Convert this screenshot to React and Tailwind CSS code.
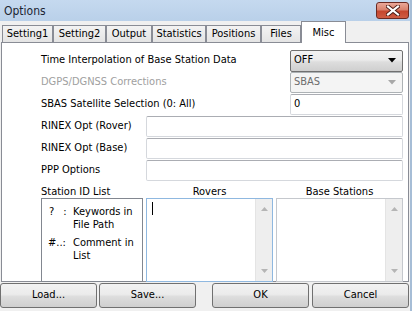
import React from "react";

const tabs = ["Setting1", "Setting2", "Output", "Statistics", "Positions", "Files"];
const tabWidths = ["w-[51px]", "w-[53px]", "w-[46px]", "w-[54px]", "w-[55px]", "w-[40px]"];

function CloseButton() {
  return (
    <div className="w-[33px] h-[17px] rounded-[3px] border border-[#6b2a22] bg-[linear-gradient(#eaa899,#d9826e_45%,#c5462e_55%,#cf5c43)] flex items-center justify-center">
      <svg width="14" height="11" viewBox="0 0 14 11">
        <path d="M2 1.5 L12 9.5 M12 1.5 L2 9.5" stroke="#4a1a14" strokeWidth="4" strokeLinecap="square" />
        <path d="M2 1.5 L12 9.5 M12 1.5 L2 9.5" stroke="#ffffff" strokeWidth="2.2" strokeLinecap="square" />
      </svg>
    </div>
  );
}

function Arrow({ color }) {
  return (
    <svg width="8" height="5" viewBox="0 0 8 5">
      <path d="M0 0 H8 L4 4.5 Z" fill={color} />
    </svg>
  );
}

function Scrollbar() {
  return (
    <div className="w-[17px] h-full bg-[#eeeeee] border-l border-[#e4e4e4] flex flex-col items-center justify-between py-[8px]">
      <svg width="7" height="4" viewBox="0 0 7 4">
        <path d="M0 4 H7 L3.5 0 Z" fill="#b5b5b5" />
      </svg>
      <svg width="7" height="4" viewBox="0 0 7 4">
        <path d="M0 0 H7 L3.5 4 Z" fill="#b5b5b5" />
      </svg>
    </div>
  );
}

function Field({ children, className = "" }) {
  return (
    <div className={`h-[21px] bg-white border border-[#d5d8dd] border-t-[#abadb3] rounded-[2px] flex items-center px-[3px] ${className}`}>
      {children}
    </div>
  );
}

function Button({ label, className = "" }) {
  return (
    <div className={`h-[25px] w-[97px] rounded-[3px] border border-[#707070] bg-[linear-gradient(#f2f2f2,#ebebeb_45%,#dddddd_55%,#cfcfcf)] flex items-center justify-center ${className}`}>
      {label}
    </div>
  );
}

export default function App() {
  return (
    <div className="w-[412px] h-[311px] overflow-hidden bg-[#f0f0f0] text-[11px] text-black font-['DejaVu_Sans_Condensed','Liberation_Sans',sans-serif] border-r-2 border-[#a6bdd6]">
      {/* title bar */}
      <div className="h-[21px] bg-[linear-gradient(#c5d9ef,#b9d0e9)] flex items-center justify-between pl-[4px] pr-[1px]">
        <span className="text-[12px] text-[#1c2633]">Options</span>
        <CloseButton />
      </div>

      {/* tabs */}
      <div className="h-[21px] flex items-end pl-[2px]">
        {tabs.map((t, i) => (
          <div
            key={t}
            className={`h-[17px] ${tabWidths[i]} border border-b-0 border-[#898c95] bg-[linear-gradient(#f3f3f3,#e4e4e4)] flex items-center justify-center`}
          >
            {t}
          </div>
        ))}
        <div className="relative z-10 h-[22px] w-[45px] -mb-px border border-b-0 border-[#898c95] bg-white flex items-start justify-center pt-[3px]">
          Misc
        </div>
      </div>

      {/* panel */}
      <div className="ml-[1px] w-[408px] h-[240px] bg-white border border-[#898c95] pt-[7px] pl-[39px] pr-[5px] flex flex-col gap-px">
        <div className="h-[21px] flex items-center">
          <span className="flex-1">Time Interpolation of Base Station Data</span>
          <div className="w-[113px] h-[22px] rounded-[2px] border border-[#707070] bg-[linear-gradient(#f2f2f2,#ebebeb_45%,#dddddd_55%,#cfcfcf)] flex items-center justify-between pl-[3px] pr-[6px]">
            <span>OFF</span>
            <Arrow color="#000000" />
          </div>
        </div>
        <div className="h-[21px] flex items-center">
          <span className="flex-1 text-[#a0a0a0]">DGPS/DGNSS Corrections</span>
          <div className="w-[113px] h-[21px] rounded-[2px] border border-[#adb2b5] bg-[#f4f4f4] flex items-center justify-between pl-[3px] pr-[6px] text-[#6d6d6d]">
            <span>SBAS</span>
            <Arrow color="#a8a8a8" />
          </div>
        </div>
        <div className="h-[21px] flex items-center">
          <span className="flex-1">SBAS Satellite Selection (0: All)</span>
          <Field className="w-[113px]">0</Field>
        </div>
        {["RINEX Opt (Rover)", "RINEX Opt (Base)", "PPP Options"].map((l) => (
          <div key={l} className="h-[21px] flex items-center">
            <span className="w-[105px]">{l}</span>
            <Field className="flex-1" />
          </div>
        ))}

        {/* station lists */}
        <div className="mt-[3px] grid grid-cols-[102px_127px_127px] gap-x-[3px]">
          <div className="h-[13px] leading-[13px]">Station ID List</div>
          <div className="h-[13px] leading-[13px] text-center">Rovers</div>
          <div className="h-[13px] leading-[13px] text-center">Base Stations</div>

          <div className="h-[84px] border border-[#828790] pt-[6px] pl-[6px] grid grid-cols-[25px_1fr] gap-y-[5px] content-start leading-[13px]">
            <span className="flex gap-[9px] pl-px">
              <span>?</span>
              <span>:</span>
            </span>
            <span>Keywords in<br />File Path</span>
            <span>#..:</span>
            <span>Comment in<br />List</span>
          </div>
          <div className="h-[84px] border border-[#8fb8e0] flex">
            <div className="flex-1 pl-[5px] pt-[3px]">
              <div className="w-px h-[13px] bg-black" />
            </div>
            <Scrollbar />
          </div>
          <div className="h-[84px] border border-[#c5c8cd] flex">
            <div className="flex-1" />
            <Scrollbar />
          </div>
        </div>
      </div>

      {/* buttons */}
      <div className="mt-[1px] flex">
        <Button label="Load..." />
        <Button label="Save..." className="ml-[2px]" />
        <Button label="OK" className="ml-[16px] w-[96px]" />
        <Button label="Cancel" className="ml-[3px]" />
      </div>
    </div>
  );
}
